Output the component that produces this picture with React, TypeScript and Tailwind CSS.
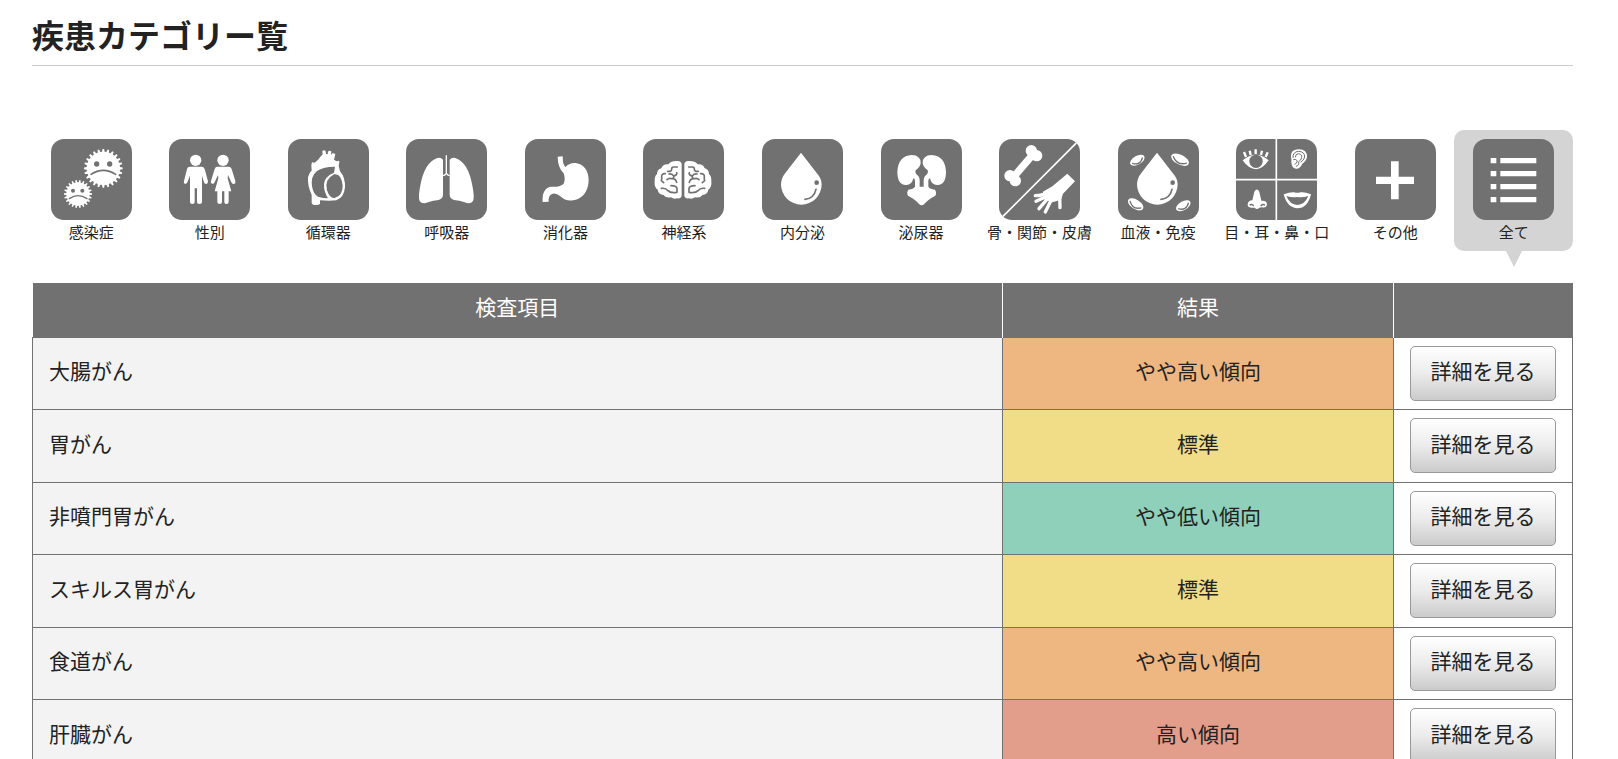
import type { ReactNode } from 'react'
import clsx from 'clsx'

const GRAY = '#717171'

// points of a toothed circle, used for the virus icons
function gear(cx: number, cy: number, inner: number, outer: number, teeth: number) {
  const points: string[] = []
  const step = (Math.PI * 2) / teeth
  for (let i = 0; i < teeth; i++) {
    const a = i * step
    const corners = [[inner, -0.3], [outer, -0.16], [outer, 0.16], [inner, 0.3]]
    corners.forEach(([r, k]) => {
      points.push(`${(cx + r * Math.cos(a + k * step)).toFixed(1)},${(cy + r * Math.sin(a + k * step)).toFixed(1)}`)
    })
  }
  return points.join(' ')
}

const Drop = () => (
  <>
    <path d="M117 41 L164 102 Q179 119 179 136 A61 61 0 0 1 57 136 Q57 118 70 102Z" />
    <circle cx="164" cy="131" r="7" fill={GRAY} />
    <path d="M162 151 Q156 178 129 181" fill="none" stroke={GRAY} strokeWidth="5" strokeLinecap="round" />
  </>
)

const BloodCell = ({ x, y, angle, rx, ry }: { x: number; y: number; angle: number; rx: number; ry: number }) => (
  <g transform={`translate(${x} ${y}) rotate(${angle})`}>
    <ellipse rx={rx} ry={ry} />
    <path d={`M${-rx + 6} 0 Q0 ${ry + 6} ${rx - 6} 0`} fill="none" stroke={GRAY} strokeWidth="4" />
  </g>
)

const BrainHalf = () => (
  <>
    <path d="M100 66 Q114 64 116 75 L116 170 Q114 180 102 178 Q92 181 84 175 Q68 178 62 168 Q46 166 44 152 Q33 144 35 128 Q34 112 42 105 Q42 92 55 88 Q60 74 76 76 Q84 66 100 66Z" />
    <g fill="none" stroke={GRAY} strokeWidth="5" strokeLinecap="round" strokeLinejoin="round">
      <path d="M74 97 Q87 98 86 90 Q86 84 92 84 H103" />
      <path d="M67 104 Q55 103 56 114 Q57 120 55 125 L62 131" />
      <path d="M78 105 Q88 103 92 111 Q104 108 101 101" />
      <path d="M72 122 Q78 116 86 119 Q94 117 92 111 M86 119 Q98 118 101 130" />
      <path d="M55 148 Q68 146 75 155 Q82 163 102 160 V149 Q101 140 84 140" />
    </g>
  </>
)

const LUNG = 'M94 57 Q105 55 111 62 L111 165 Q112 178 98 183 Q82 184 66 190 Q48 197 41 186 Q36 178 42 145 Q54 70 94 57Z'
const KIDNEY = 'M92 48 Q119 49 119 72 Q118 84 104 94 Q101 99 106 106 Q116 112 116 124 V146 H102 V126 Q102 119 97 118 Q93 139 74 138 Q49 136 49 98 Q52 50 92 48Z'

const ICONS: Record<string, ReactNode> = {
  virus: (
    <>
      <polygon points={gear(157, 88, 50, 58, 24)} />
      <circle cx="137" cy="75" r="8" fill={GRAY} />
      <circle cx="176" cy="75" r="8" fill={GRAY} />
      <path d="M120 106 Q157 82 194 106" fill="none" stroke={GRAY} strokeWidth="5" strokeLinecap="round" />
      <polygon points={gear(81, 165, 35, 42, 22)} />
      <circle cx="66" cy="155" r="6" fill={GRAY} />
      <circle cx="94" cy="155" r="6" fill={GRAY} />
      <path d="M55 179 Q81 161 108 179" fill="none" stroke={GRAY} strokeWidth="4" strokeLinecap="round" />
    </>
  ),
  people: (
    <>
      <circle cx="80" cy="64" r="17" />
      <path d="M62 83 H98 Q104 83 107 90 L117 127 Q118 134 112 135 Q107 136 105 130 L99 110 V190 Q99 195 91 195 Q84 195 84 190 V148 H77 V190 Q77 195 70 195 Q63 195 63 190 V110 L55 130 Q52 136 47 134 Q43 132 45 126 L54 90 Q56 83 62 83Z" />
      <circle cx="162" cy="64" r="17" />
      <path d="M145 83 H179 Q185 83 188 90 L199 126 Q201 133 195 135 Q189 136 187 130 L177 108 L176 118 L187 157 H179 V189 Q179 195 172 195 Q166 195 166 189 V157 H159 V189 Q159 195 152 195 Q145 195 145 189 V157 H137 L148 118 L147 108 L137 130 Q134 136 129 134 Q124 132 126 126 L137 90 Q139 83 145 83Z" />
    </>
  ),
  heart: (
    <>
      <path d="M70 78 L72 70 L80 71 Q90 65 96 55 L104 46 L103 36 Q108 31 113 36 L114 45 L119 46 L120 38 Q124 33 130 37 L129 48 L133 43 Q138 41 142 46 L138 62 L146 67 Q155 63 154 70 L152 80 L156 97 Q172 115 171 145 Q168 176 145 184 Q125 186 96 184 L96 195 Q88 200 75 197 L71 192 L71 168 Q58 140 60 115 Q64 100 71 95Z" />
      <path d="M141 83 Q102 83 86 97 Q68 112 72 142 Q76 166 90 173 Q105 178 120 178 Q107 158 108 136 Q110 112 138 101Z" fill={GRAY} />
      <path d="M138 106 Q160 102 164 140 Q164 170 140 177 Q126 180 117 154 Q108 122 138 106Z" fill={GRAY} />
    </>
  ),
  lungs: (
    <>
      <path d={LUNG} />
      <path d={LUNG} transform="translate(242 0) scale(-1 1)" />
      <path d="M121 49 V104 M111 110 Q116 110 121 103 Q126 110 131 110" fill="none" stroke="#fff" strokeWidth="4" />
    </>
  ),
  stomach: (
    <path d="M98 53 L113 52 L114 70 Q116 78 121 84 Q135 70 152 72 Q190 78 191 125 Q188 175 145 184 Q122 188 106 172 Q95 162 83 164 Q69 168 71 188 L53 189 Q50 148 78 143 Q106 145 116 134 Q122 120 116 103 Q98 85 98 53Z" />
  ),
  brain: (
    <>
      <BrainHalf />
      <g transform="translate(240 0) scale(-1 1)">
        <BrainHalf />
      </g>
    </>
  ),
  drop: <Drop />,
  kidneys: (
    <>
      <path d={KIDNEY} />
      <path d={KIDNEY} transform="translate(244 0) scale(-1 1)" />
      <path d="M102 143 H142 Q146 150 162 152 Q168 160 163 170 Q140 182 130 195 Q122 203 114 195 Q104 182 81 170 Q76 160 82 152 Q98 150 102 143Z" />
    </>
  ),
  bone: (
    <>
      <path d="M233 11 L11 233" stroke="#fff" strokeWidth="5" />
      <path d="M104 44 L42 116" stroke="#fff" strokeWidth="22" />
      <circle cx="97" cy="35" r="17" />
      <circle cx="113" cy="50" r="17" />
      <circle cx="33" cy="110" r="17" />
      <circle cx="49" cy="125" r="17" />
      <path d="M205 104 L228 127 L192 164 L186 182 L160 190 L132 180 L132 158 L160 142Z" />
      <g fill="none" stroke="#fff" strokeWidth="10" strokeLinecap="round">
        <path d="M154 158 Q130 170 109 170" />
        <path d="M144 172 L111 187" />
        <path d="M145 180 L120 209" />
        <path d="M158 180 L139 219" />
        <path d="M182 170 L183 206" />
      </g>
    </>
  ),
  blood: (
    <>
      <Drop />
      <BloodCell x={58} y={64} angle={-30} rx={24} ry={13} />
      <BloodCell x={186} y={62} angle={27} rx={29} ry={15} />
      <BloodCell x={53} y={196} angle={32} rx={26} ry={14} />
      <BloodCell x={196} y={200} angle={-30} rx={24} ry={13} />
    </>
  ),
  senses: (
    <>
      <path d="M121 0 V243 M0 122 H243" stroke="#fff" strokeWidth="5" />
      {/* eye */}
      <path d="M20 64 Q60 30 98 64 Q80 90 60 91 Q38 90 20 64Z" />
      <circle cx="60" cy="67" r="20" fill={GRAY} />
      <path d="M24 39 L30 54 M41 35 L44 48 M59 31 V45 M78 35 L75 48 M95 40 L89 54" stroke="#fff" strokeWidth="7" />
      {/* ear */}
      <path d="M166 60 Q160 32 188 31 Q214 32 213 54 Q211 67 199 74 Q192 90 180 89 Q164 88 166 60Z" />
      <g fill="none" stroke={GRAY} strokeWidth="3">
        <path d="M171 57 Q170 38 188 37 Q206 38 206 54 Q204 64 194 70" />
        <path d="M178 55 Q178 44 188 44 Q199 46 197 56 Q195 64 188 68 Q190 80 180 82" />
        <path d="M172 62 Q180 58 184 66 Q182 74 176 76" />
      </g>
      {/* nose */}
      <path d="M55 158 Q63 145 70 158 L76 185 Q94 184 93 198 Q90 208 78 205 L70 206 Q63 214 56 206 L46 206 Q34 206 35 196 Q37 184 49 184Z" />
      <path d="M41 199 Q47 193 53 201 M87 199 Q81 193 74 201" fill="none" stroke={GRAY} strokeWidth="4" />
      {/* mouth */}
      <path d="M143 166 Q165 158 174 160 Q184 163 194 160 Q205 158 225 166 Q215 208 184 208 Q153 206 143 166Z" />
      <path d="M151 171 Q168 176 184 174 Q200 176 217 171 Q206 197 184 198 Q162 197 151 171Z" fill={GRAY} />
    </>
  ),
  plus: <path d="M108 67 H131 V113 H177 V135 H131 V181 H108 V135 H63 V113 H108Z" />,
  list: (
    <>
      {[57, 96, 135, 174].map((y) => (
        <path key={y} d={`M53 ${y} h17 v16 h-17Z M82 ${y} h108 v16 h-108Z`} />
      ))}
    </>
  ),
}

const CATEGORIES = [
  { icon: 'virus', label: '感染症' },
  { icon: 'people', label: '性別' },
  { icon: 'heart', label: '循環器' },
  { icon: 'lungs', label: '呼吸器' },
  { icon: 'stomach', label: '消化器' },
  { icon: 'brain', label: '神経系' },
  { icon: 'drop', label: '内分泌' },
  { icon: 'kidneys', label: '泌尿器' },
  { icon: 'bone', label: '骨・関節・皮膚' },
  { icon: 'blood', label: '血液・免疫' },
  { icon: 'senses', label: '目・耳・鼻・口' },
  { icon: 'plus', label: 'その他' },
  { icon: 'list', label: '全て', active: true },
]

const LEVELS = {
  high: { text: '高い傾向', color: 'bg-[#e39d8b]' },
  slightlyHigh: { text: 'やや高い傾向', color: 'bg-[#eeb781]' },
  normal: { text: '標準', color: 'bg-[#f1dc87]' },
  slightlyLow: { text: 'やや低い傾向', color: 'bg-[#8ed0ba]' },
}

const RESULTS: { name: string; level: keyof typeof LEVELS }[] = [
  { name: '大腸がん', level: 'slightlyHigh' },
  { name: '胃がん', level: 'normal' },
  { name: '非噴門胃がん', level: 'slightlyLow' },
  { name: 'スキルス胃がん', level: 'normal' },
  { name: '食道がん', level: 'slightlyHigh' },
  { name: '肝臓がん', level: 'high' },
]

function CategoryNav() {
  return (
    <nav className="mt-16 grid grid-cols-13">
      {CATEGORIES.map(({ icon, label, active }) => (
        <a
          key={icon}
          href="#results"
          className={clsx(
            'relative flex flex-col items-center rounded-[10px] pt-[9px] pb-[7px]',
            active && 'bg-[#d4d4d4]'
          )}
        >
          <span className="size-[81px] overflow-hidden rounded-[13px] bg-[#717171]">
            <svg viewBox="0 0 243 243" className="size-full" fill="#fff" aria-hidden="true">
              {ICONS[icon]}
            </svg>
          </span>
          <span className="text-[15px] leading-6 whitespace-nowrap">{label}</span>
          {active && (
            <span className="absolute top-full left-1/2 -translate-x-1/2 border-x-8 border-t-16 border-x-transparent border-t-[#d4d4d4]" />
          )}
        </a>
      ))}
    </nav>
  )
}

function ResultTable() {
  return (
    <table id="results" className="mt-8 w-full table-fixed border-collapse text-[21px] leading-8">
      <thead>
        <tr className="h-[54px] bg-[#717171] text-white">
          <th className="w-[63%] border-r border-white pb-2 font-normal">検査項目</th>
          <th className="border-r border-white pb-2 font-normal">結果</th>
          <th className="w-[179px]" aria-label="詳細" />
        </tr>
      </thead>
      <tbody>
        {RESULTS.map(({ name, level }) => (
          <tr key={name} className="h-[72px] even:h-[73px]">
            <td className="border border-[#717171] bg-[#f3f3f3] px-4 pb-1.5">{name}</td>
            <td className={clsx('border border-[#717171] pb-1.5 text-center', LEVELS[level].color)}>
              {LEVELS[level].text}
            </td>
            <td className="border border-[#717171] px-4">
              <button
                type="button"
                className="block h-[55px] w-full rounded-[5px] border border-[#999] bg-linear-to-b from-white via-[#ececec] to-[#cbcbcb] pb-1.5 whitespace-nowrap"
              >
                詳細を見る
              </button>
            </td>
          </tr>
        ))}
      </tbody>
    </table>
  )
}

export default function App() {
  return (
    <main className="bg-white pt-2.5 pr-[45px] pl-8 font-['Noto_Sans_CJK_JP',sans-serif] text-[#222]">
      <h1 className="border-b border-[#ccc] pb-[7px] text-[32px] leading-12 font-bold">疾患カテゴリー覧</h1>
      <CategoryNav />
      <ResultTable />
    </main>
  )
}
